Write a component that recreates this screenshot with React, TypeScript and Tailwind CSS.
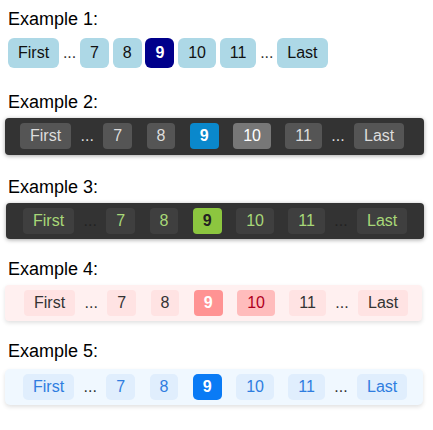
import { ReactNode } from "react";

type Theme = {
  bar: string;
  item: string;
  active: string;
  focus?: string;
  dots: string;
};

const pages = ["First", "...", "7", "8", "9", "10", "11", "...", "Last"];

const PageItem = ({ label, theme }: { label: string; theme: Theme }) => {
  if (label === "...") {
    return <span className={theme.dots}>...</span>;
  }
  let cls = theme.item;
  if (label === "9") cls = theme.active;
  else if (label === "10" && theme.focus) cls = theme.focus;
  return <a className={`block px-[10px] leading-[18px] ${cls}`}>{label}</a>;
};

const Section = ({
  title,
  className,
  children,
}: {
  title: string;
  className: string;
  children: ReactNode;
}) => (
  <section className={className}>
    <h3 className="h-[20px] pl-[3px] text-[18px] leading-[20px] font-normal text-black">
      {title}
    </h3>
    {children}
  </section>
);

const themes: Theme[] = [
  {
    bar: "gap-[3.8px]",
    item: "py-[6px] rounded-[6px] bg-[#add8e6] text-[#111]",
    active: "py-[6px] rounded-[6px] bg-[#00008b] text-white font-bold",
    dots: "text-[#333]",
  },
  {
    bar: "gap-[4.4px] bg-[#333] shadow-[0_1px_4px_rgba(0,0,0,0.35)]",
    item: "mx-[5px] py-[4px] rounded-[4px] bg-[#555] text-[#ddd]",
    active: "mx-[5px] py-[4px] rounded-[4px] bg-[#0a88cc] text-white font-bold",
    focus: "mx-[5px] py-[4px] rounded-[4px] bg-[#777] text-white",
    dots: "text-[#ddd]",
  },
  {
    bar: "gap-[4.4px] bg-[#333] shadow-[0_1px_4px_rgba(0,0,0,0.35)]",
    item: "mx-[5px] py-[4px] rounded-[4px] bg-[#3f3f3f] text-[#a8d878]",
    active: "mx-[5px] py-[4px] rounded-[4px] bg-[#8cc63f] text-[#222] font-bold",
    dots: "text-[#222]",
  },
  {
    bar: "gap-[4.4px] bg-[#fff0f0] shadow-[0_2px_4px_rgba(0,0,0,0.12)]",
    item: "mx-[5px] py-[4px] rounded-[4px] bg-[#ffe3e3] text-[#333]",
    active: "mx-[5px] py-[4px] rounded-[4px] bg-[#ff9393] text-white font-bold",
    focus: "mx-[5px] py-[4px] rounded-[4px] bg-[#ffbcbc] text-[#b0001e]",
    dots: "text-[#333]",
  },
  {
    bar: "gap-[4.4px] bg-[#f0f8ff] shadow-[0_2px_4px_rgba(0,0,0,0.12)]",
    item: "mx-[5px] py-[4px] rounded-[5px] bg-[#e0eefd] text-[#2f7de0]",
    active: "mx-[5px] py-[4px] rounded-[5px] bg-[#0a7bf5] text-white font-bold",
    dots: "text-[#333]",
  },
];

const Pagination = ({ theme, className }: { theme: Theme; className: string }) => (
  <nav className={`flex items-center text-[16px] ${theme.bar} ${className}`}>
    {pages.map((p, i) => (
      <PageItem key={i} label={p} theme={theme} />
    ))}
  </nav>
);

export default function App() {
  return (
    <div className="min-h-[430px] w-[433px] bg-white px-[5px] pt-[9px] font-['Liberation_Sans',Arial,sans-serif]">
      <Section title="Example 1:" className="">
        <Pagination theme={themes[0]} className="mt-[9px] pl-[3px]" />
      </Section>
      <Section title="Example 2:" className="mt-[24px]">
        <Pagination
          theme={themes[1]}
          className="mt-[6px] w-[419px] rounded-[4px] pt-[5px] pb-[6px] pl-[10px]"
        />
      </Section>
      <Section title="Example 3:" className="mt-[22px]">
        <Pagination
          theme={themes[2]}
          className="mt-[6px] ml-[1px] w-[418px] rounded-[4px] py-[5px] pl-[12px]"
        />
      </Section>
      <Section title="Example 4:" className="mt-[20px]">
        <Pagination
          theme={themes[3]}
          className="mt-[6px] w-[417px] rounded-[4px] py-[5px] pl-[14px]"
        />
      </Section>
      <Section title="Example 5:" className="mt-[20px]">
        <Pagination
          theme={themes[4]}
          className="mt-[8px] w-[418px] rounded-[5px] py-[5px] pl-[13px]"
        />
      </Section>
    </div>
  );
}
